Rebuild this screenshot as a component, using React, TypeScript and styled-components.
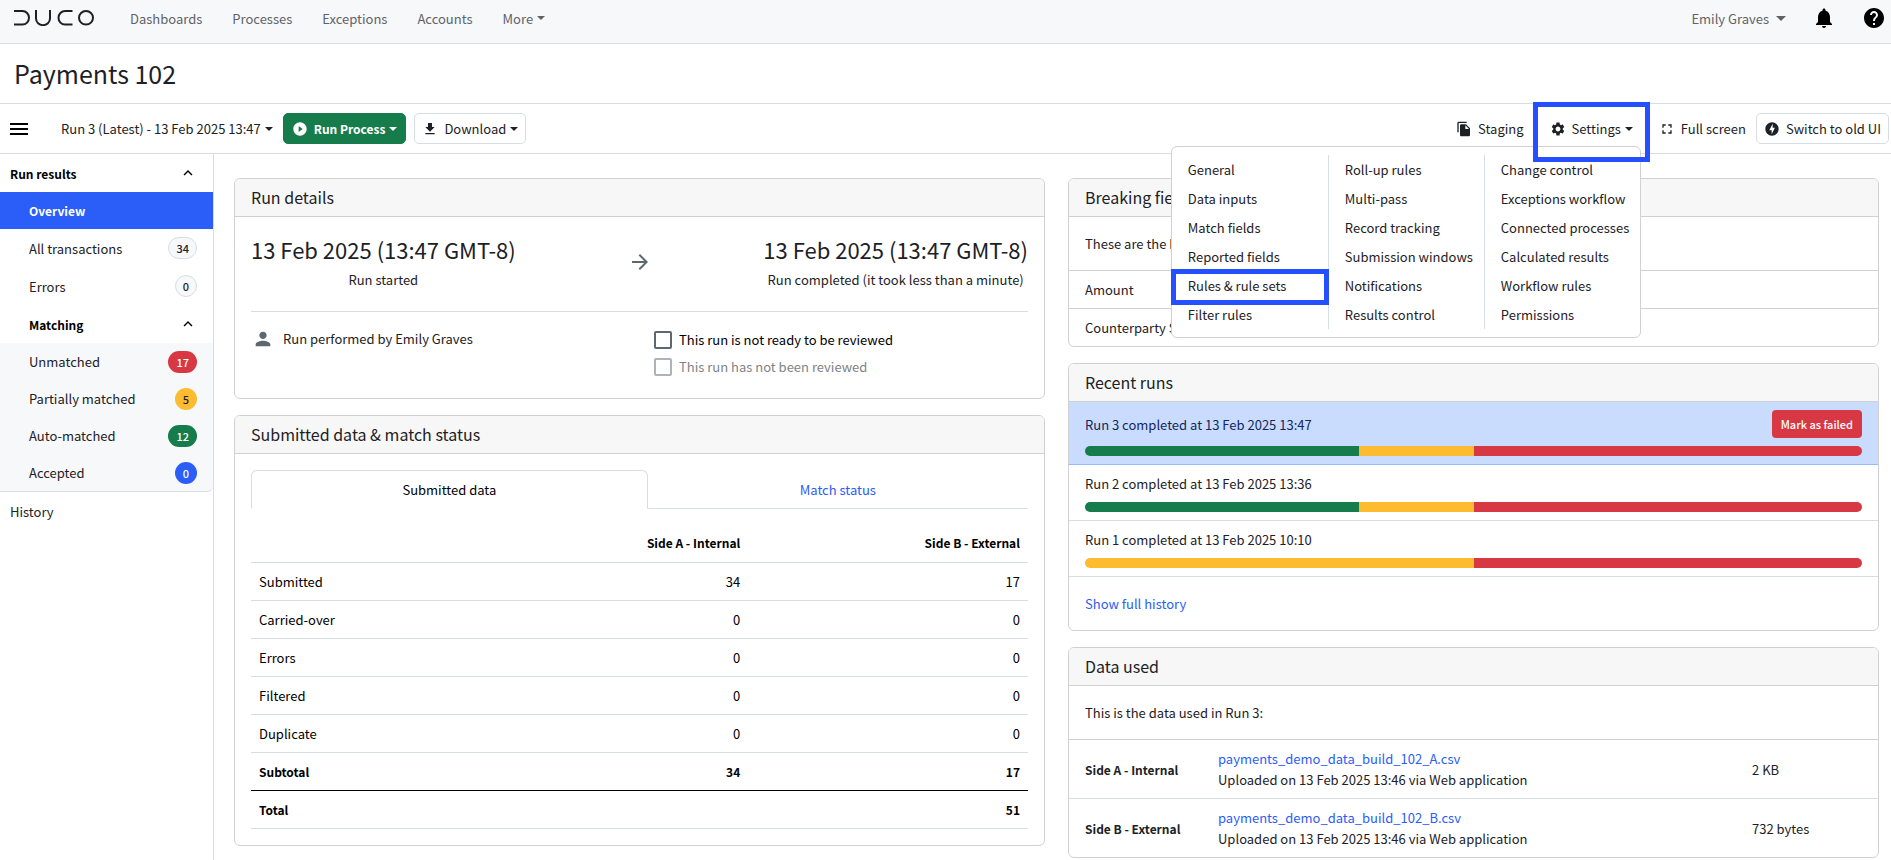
import React, { ReactNode, useState } from "react";
import styled, { createGlobalStyle, css } from "styled-components";
import {
  MdArrowForward,
  MdDownload,
  MdFileCopy,
  MdFullscreen,
  MdHelp,
  MdKeyboardArrowUp,
  MdNotifications,
  MdOfflineBolt,
  MdPerson,
  MdPlayCircleFilled,
  MdSettings,
} from "react-icons/md";

const color = {
  text: "#1d2125",
  muted: "#5f6368",
  line: "#d8dde2",
  cardLine: "#cfd1d4",
  surface: "#f7f8fa",
  cardHead: "#f7f7f7",
  blue: "#2b5df9",
  frame: "#2450ff",
  green: "#177c4c",
  amber: "#fdbb30",
  red: "#d73843",
};

const GlobalStyle = createGlobalStyle`
  *, *::before, *::after { box-sizing: border-box; }
  body {
    margin: 0;
    background: #fff;
    color: ${color.text};
    font-family: "Source Sans Pro", "Noto Sans CJK SC", "Noto Sans", sans-serif;
    font-size: 13px;
    line-height: 21px;
  }
  button, input { font: inherit; color: inherit; }
  h1, h2, h3, p, ul { margin: 0; padding: 0; font-weight: 400; }
  ul { list-style: none; }
  a { color: inherit; text-decoration: none; }
`;

const boldText = css`
  font-size: 12px;
  font-weight: 700;
`;

const Page = styled.div`
  display: flex;
  flex-direction: column;
  min-height: 100vh;
`;

const TopBar = styled.header`
  display: flex;
  align-items: center;
  height: 44px;
  padding: 0 5px 7px 14px;
  background: ${color.surface};
  border-bottom: 1px solid ${color.line};
  color: ${color.muted};
`;

const Logo = styled.svg`
  width: 80px;
  height: 16px;
  margin-right: 36px;
`;

const MainNav = styled.nav`
  display: flex;
  gap: 30px;
  flex: 1;
`;

const Caret = styled.span<{ $large?: boolean }>`
  display: inline-block;
  border: ${(p) => (p.$large ? 5 : 4)}px solid transparent;
  border-top-color: currentColor;
  border-bottom: 0;
`;

const PlainButton = styled.button`
  display: inline-flex;
  align-items: center;
  gap: 4px;
  padding: 0;
  border: 0;
  background: none;
  white-space: nowrap;
  cursor: pointer;
`;

const UserArea = styled.div`
  display: flex;
  align-items: center;
  gap: 26px;
`;

const UserButton = styled(PlainButton)`
  gap: 7px;
`;

const IconButton = styled(PlainButton)`
  color: #000;
`;

const TitleBar = styled.div`
  display: flex;
  align-items: center;
  height: 60px;
  padding: 0 14px 2px;
  border-bottom: 1px solid ${color.line};
`;

const Title = styled.h1`
  font-size: 25px;
  line-height: 32px;
`;

const Toolbar = styled.div`
  display: flex;
  align-items: center;
  justify-content: space-between;
  height: 50px;
  padding: 0 2px 0 10px;
  border-bottom: 1px solid ${color.line};
`;

const ToolGroup = styled.div`
  display: flex;
  align-items: center;
`;

const MenuButton = styled(PlainButton)`
  flex-direction: column;
  gap: 3px;
  width: 18px;
  margin-right: 33px;
  span { width: 100%; height: 2px; background: #000; }
`;

const RunPicker = styled(PlainButton)`
  margin-right: 10px;
`;

const BoxButton = styled(PlainButton)<{ $primary?: boolean }>`
  height: 31px;
  padding: 0 7px;
  border: 1px solid ${color.line};
  border-radius: 5px;
  margin-right: 8px;
  &:last-child { margin-right: 0; }
  svg { margin-right: 2px; }
  ${(p) =>
    p.$primary &&
    css`
      ${boldText}
      padding: 0 8px;
      background: ${color.green};
      border-color: ${color.green};
      color: #fff;
    `}
`;

const ToolButton = styled(PlainButton)`
  svg { margin-right: 2px; }
`;

const FullScreenButton = styled(ToolButton)`
  margin-right: 10px;
`;

const SettingsArea = styled.div`
  position: relative;
  display: flex;
  align-items: center;
  padding: 0 26px;
`;

const SettingsFrame = styled.span`
  position: absolute;
  z-index: 3;
  inset: -16px 9px -23px;
  border: 5px solid ${color.frame};
  pointer-events: none;
`;

const SettingsMenu = styled.div`
  position: absolute;
  z-index: 2;
  top: 28px;
  right: 18px;
  display: grid;
  grid-template-columns: repeat(3, 156px);
  padding: 8px 0;
  background: #fff;
  border: 1px solid ${color.cardLine};
  border-radius: 6px;
`;

const MenuColumn = styled.ul`
  & + & { border-left: 1px solid ${color.line}; }
`;

const MenuItem = styled.li`
  position: relative;
  a {
    display: block;
    padding: 4px 0 4px 16px;
    white-space: nowrap;
  }
`;

const ItemFrame = styled.span`
  position: absolute;
  inset: -2px -1px -5px;
  border: 5px solid ${color.frame};
  pointer-events: none;
`;

const Body = styled.div`
  display: flex;
  flex: 1;
`;

const Sidebar = styled.nav`
  width: 214px;
  flex: none;
  border-right: 1px solid ${color.line};
`;

const SideHeading = styled.button<{ $nested?: boolean }>`
  display: flex;
  align-items: center;
  justify-content: space-between;
  width: 100%;
  height: 38px;
  padding: 0 16px 0 ${(p) => (p.$nested ? 29 : 10)}px;
  border: 0;
  background: none;
  color: #000;
  ${boldText}
  cursor: pointer;
`;

const SideLink = styled.a<{ $active?: boolean; $top?: boolean; $dense?: boolean }>`
  display: flex;
  align-items: center;
  justify-content: space-between;
  height: ${(p) => (p.$dense || p.$active ? 37 : 38)}px;
  padding: 0 16px 0 ${(p) => (p.$top ? 10 : 29)}px;
  ${(p) =>
    p.$active &&
    css`
      ${boldText}
      background: ${color.blue};
      color: #fff;
    `}
`;

const MatchGroup = styled.div`
  background: ${color.surface};
  border-bottom: 1px solid ${color.line};
  border-radius: 0 0 6px 0;
`;

const badgeTone = {
  plain: css`background: ${color.surface}; border-color: ${color.line}; color: ${color.text};`,
  red: css`background: ${color.red}; color: #fff;`,
  amber: css`background: ${color.amber}; color: ${color.text};`,
  green: css`background: ${color.green}; color: #fff;`,
  blue: css`background: ${color.blue}; color: #fff;`,
};

const Badge = styled.span<{ $tone: keyof typeof badgeTone }>`
  padding: 0 7px;
  border: 1px solid transparent;
  border-radius: 11px;
  font-size: 11px;
  line-height: 20px;
  font-weight: 500;
  ${(p) => badgeTone[p.$tone]}
`;

const Content = styled.main`
  display: grid;
  grid-template-columns: minmax(0, 1fr) minmax(0, 1fr);
  gap: 23px;
  align-items: start;
  flex: 1;
  padding: 24px 12px 0 20px;
`;

const Column = styled.div`
  display: flex;
  flex-direction: column;
  gap: 16px;
`;

const Card = styled.section`
  border: 1px solid ${color.cardLine};
  border-radius: 6px;
  overflow: hidden;
`;

const CardTitle = styled.h2`
  padding: 6px 16px 7px;
  background: ${color.cardHead};
  border-bottom: 1px solid ${color.cardLine};
  font-size: 16px;
  line-height: 24px;
`;

const DetailBody = styled.div`
  padding: 16px 16px 18px;
`;

const Times = styled.div`
  display: flex;
  justify-content: space-between;
  align-items: center;
  padding: 0 0 21px;
  border-bottom: 1px solid ${color.line};
`;

const TimeBlock = styled.div`
  text-align: center;
`;

const TimeValue = styled.h3`
  padding-bottom: 3px;
  font-size: 22px;
  line-height: 33px;
`;

const Review = styled.div`
  display: grid;
  grid-template-columns: 403px 1fr;
  padding-top: 14px;
`;

const Performer = styled.p`
  display: flex;
  align-items: flex-start;
  gap: 9px;
  padding: 2px 0 0 1px;
  svg { color: #5d676f; }
`;

const CheckLabel = styled.label<{ $off?: boolean }>`
  display: flex;
  align-items: center;
  gap: 7px;
  height: 27px;
  color: ${(p) => (p.$off ? "#808386" : "#000")};
`;

const CheckBox = styled.input`
  appearance: none;
  width: 18px;
  height: 18px;
  margin: 0;
  border: 2px solid #5d676f;
  border-radius: 2px;
  background: #fff;
  &:checked { background: ${color.blue}; }
  &:disabled { border-color: #aeb3b7; }
`;

const SubmittedBody = styled.div`
  padding: 16px;
`;

const Tabs = styled.div`
  display: flex;
  margin-bottom: 15px;
`;

const Tab = styled.button<{ $active?: boolean }>`
  flex: ${(p) => (p.$active ? "397 0 0" : "380 0 0")};
  height: 39px;
  border: 1px solid transparent;
  border-bottom-color: ${color.line};
  border-radius: 6px 6px 0 0;
  background: none;
  color: ${color.blue};
  cursor: pointer;
  ${(p) =>
    p.$active
      ? css`
          border-color: ${color.line};
          border-bottom-color: transparent;
          color: #000;
        `
      : css`border-radius: 0;`}
`;

const DataTable = styled.table`
  width: 100%;
  border-collapse: collapse;
  table-layout: fixed;
  color: #000;
`;

const Cell = styled.td`
  padding: 8px;
  text-align: right;
`;

const HeadCell = styled.th<{ $left?: boolean }>`
  padding: 8px;
  font-weight: inherit;
  text-align: ${(p) => (p.$left ? "left" : "right")};
`;

const Row = styled.tr<{ $bold?: boolean; $rule?: boolean }>`
  height: 38px;
  border-bottom: 1px solid ${(p) => (p.$rule ? "#000" : color.line)};
  ${(p) => p.$bold && boldText}
`;

const Line = styled.div<{ $tall?: boolean; $last?: boolean }>`
  padding: ${(p) => (p.$tall ? "16px" : "8px 16px")};
  border-bottom: ${(p) => (p.$last ? "0" : `1px solid ${color.cardLine}`)};
`;

const RunLine = styled.div<{ $current?: boolean }>`
  padding: 8px 16px;
  border-bottom: 1px solid ${(p) => (p.$current ? "#96b9fb" : color.line)};
  background: ${(p) => (p.$current ? "#c9dcfd" : "#fff")};
  color: ${(p) => (p.$current ? "#12265f" : color.text)};
`;

const RunHead = styled.div`
  display: flex;
  align-items: center;
  justify-content: space-between;
  margin-bottom: 8px;
`;

const FailButton = styled.button`
  height: 28px;
  padding: 0 9px;
  border: 0;
  border-radius: 4px;
  background: ${color.red};
  color: #fff;
  font-size: 11px;
  font-weight: 500;
  line-height: 18px;
  cursor: pointer;
`;

const RunBar = styled.div`
  display: flex;
  height: 10px;
  border-radius: 5px;
  overflow: hidden;
`;

const Segment = styled.span<{ $tone: "green" | "amber" | "red" }>`
  background: ${(p) => color[p.$tone]};
`;

const TextLink = styled.a`
  color: ${color.blue};
`;

const FileRow = styled.div`
  display: grid;
  grid-template-columns: 133px 1fr 110px;
  align-items: center;
  padding: 8px 16px;
  & + & { border-top: 1px solid ${color.line}; }
`;

const Strong = styled.strong`
  ${boldText}
`;

function CardBox({ title, children }: { title: string; children: ReactNode }) {
  return (
    <Card>
      <CardTitle>{title}</CardTitle>
      {children}
    </Card>
  );
}

const menuColumns = [
  ["General", "Data inputs", "Match fields", "Reported fields", "Rules & rule sets", "Filter rules"],
  ["Roll-up rules", "Multi-pass", "Record tracking", "Submission windows", "Notifications", "Results control"],
  ["Change control", "Exceptions workflow", "Connected processes", "Calculated results", "Workflow rules", "Permissions"],
];

const matching = [
  ["Unmatched", "17", "red"],
  ["Partially matched", "5", "amber"],
  ["Auto-matched", "12", "green"],
  ["Accepted", "0", "blue"],
] as const;

const tableRows = [
  ["Submitted", "34", "17"],
  ["Carried-over", "0", "0"],
  ["Errors", "0", "0"],
  ["Filtered", "0", "0"],
  ["Duplicate", "0", "0"],
];

type Share = { tone: "green" | "amber" | "red"; part: number };
const mixed: Share[] = [
  { tone: "green", part: 12 },
  { tone: "amber", part: 5 },
  { tone: "red", part: 17 },
];
const runs: { text: string; current?: boolean; shares: Share[] }[] = [
  { text: "Run 3 completed at 13 Feb 2025 13:47", current: true, shares: mixed },
  { text: "Run 2 completed at 13 Feb 2025 13:36", shares: mixed },
  {
    text: "Run 1 completed at 13 Feb 2025 10:10",
    shares: [
      { tone: "amber", part: 17 },
      { tone: "red", part: 17 },
    ],
  },
];

const files = [
  ["Side A - Internal", "payments_demo_data_build_102_A.csv", "2 KB"],
  ["Side B - External", "payments_demo_data_build_102_B.csv", "732 bytes"],
];

export default function App() {
  const [ready, setReady] = useState(false);
  return (
    <>
      <GlobalStyle />
      <Page>
        <TopBar>
          <Logo viewBox="0 0 80 16" fill="none" stroke="#1d2125" strokeWidth="2" role="img" aria-label="Duco">
            <path d="M0 1h8.500a6.500 6.800 0 0 1 0 13.600H0" />
            <path d="M22 0v8.500a6.500 6.200 0 0 0 14 0V0" />
            <path d="M58.500 1h-7.500a6.500 6.800 0 0 0 0 13.600h7.500" />
            <ellipse cx="72" cy="7.800" rx="7" ry="6.800" />
          </Logo>
          <MainNav>
            <a href="#dashboards">Dashboards</a>
            <a href="#processes">Processes</a>
            <a href="#exceptions">Exceptions</a>
            <a href="#accounts">Accounts</a>
            <PlainButton>More<Caret /></PlainButton>
          </MainNav>
          <UserArea>
            <UserButton>Emily Graves<Caret $large /></UserButton>
            <IconButton aria-label="Notifications"><MdNotifications size={24} /></IconButton>
            <IconButton aria-label="Help"><MdHelp size={24} /></IconButton>
          </UserArea>
        </TopBar>

        <TitleBar><Title>Payments 102</Title></TitleBar>

        <Toolbar>
          <ToolGroup>
            <MenuButton aria-label="Toggle menu"><span /><span /><span /></MenuButton>
            <RunPicker>Run 3 (Latest) - 13 Feb 2025 13:47<Caret /></RunPicker>
            <BoxButton $primary><MdPlayCircleFilled size={16} />Run Process<Caret /></BoxButton>
            <BoxButton><MdDownload size={16} />Download<Caret /></BoxButton>
          </ToolGroup>
          <ToolGroup>
            <ToolButton><MdFileCopy size={16} />Staging</ToolButton>
            <SettingsArea>
              <ToolButton aria-expanded="true"><MdSettings size={16} />Settings<Caret /></ToolButton>
              <SettingsFrame />
              <SettingsMenu>
                {menuColumns.map((items) => (
                  <MenuColumn key={items[0]}>
                    {items.map((item) => (
                      <MenuItem key={item}>
                        <a href="#settings">{item}</a>
                        {item === "Rules & rule sets" && <ItemFrame />}
                      </MenuItem>
                    ))}
                  </MenuColumn>
                ))}
              </SettingsMenu>
            </SettingsArea>
            <FullScreenButton><MdFullscreen size={16} />Full screen</FullScreenButton>
            <BoxButton><MdOfflineBolt size={16} />Switch to old UI</BoxButton>
          </ToolGroup>
        </Toolbar>

        <Body>
          <Sidebar>
            <SideHeading>Run results<MdKeyboardArrowUp size={18} /></SideHeading>
            <SideLink href="#overview" $active>Overview</SideLink>
            <SideLink href="#all">All transactions<Badge $tone="plain">34</Badge></SideLink>
            <SideLink href="#errors">Errors<Badge $tone="plain">0</Badge></SideLink>
            <SideHeading $nested>Matching<MdKeyboardArrowUp size={18} /></SideHeading>
            <MatchGroup>
              {matching.map(([name, count, tone]) => (
                <SideLink key={name} href="#matching" $dense>
                  {name}
                  <Badge $tone={tone}>{count}</Badge>
                </SideLink>
              ))}
            </MatchGroup>
            <SideLink href="#history" $top>History</SideLink>
          </Sidebar>

          <Content>
            <Column>
              <CardBox title="Run details">
                <DetailBody>
                  <Times>
                    <TimeBlock>
                      <TimeValue>13 Feb 2025 (13:47 GMT-8)</TimeValue>
                      <p>Run started</p>
                    </TimeBlock>
                    <MdArrowForward size={24} color="#5d676f" />
                    <TimeBlock>
                      <TimeValue>13 Feb 2025 (13:47 GMT-8)</TimeValue>
                      <p>Run completed (it took less than a minute)</p>
                    </TimeBlock>
                  </Times>
                  <Review>
                    <Performer><MdPerson size={22} />Run performed by Emily Graves</Performer>
                    <div>
                      <CheckLabel>
                        <CheckBox type="checkbox" checked={ready} onChange={() => setReady(!ready)} />
                        This run is not ready to be reviewed
                      </CheckLabel>
                      <CheckLabel $off>
                        <CheckBox type="checkbox" disabled />
                        This run has not been reviewed
                      </CheckLabel>
                    </div>
                  </Review>
                </DetailBody>
              </CardBox>

              <CardBox title="Submitted data & match status">
                <SubmittedBody>
                  <Tabs role="tablist">
                    <Tab role="tab" aria-selected="true" $active>Submitted data</Tab>
                    <Tab role="tab" aria-selected="false">Match status</Tab>
                  </Tabs>
                  <DataTable>
                    <colgroup>
                      <col style={{ width: "28%" }} />
                      <col style={{ width: "36%" }} />
                      <col style={{ width: "36%" }} />
                    </colgroup>
                    <thead>
                      <Row $bold>
                        <Cell />
                        <HeadCell scope="col">Side A - Internal</HeadCell>
                        <HeadCell scope="col">Side B - External</HeadCell>
                      </Row>
                    </thead>
                    <tbody>
                      {tableRows.map(([name, a, b]) => (
                        <Row key={name}>
                          <HeadCell scope="row" $left>{name}</HeadCell>
                          <Cell>{a}</Cell>
                          <Cell>{b}</Cell>
                        </Row>
                      ))}
                      <Row $bold $rule>
                        <HeadCell scope="row" $left>Subtotal</HeadCell>
                        <Cell>34</Cell>
                        <Cell>17</Cell>
                      </Row>
                      <Row $bold>
                        <HeadCell scope="row" $left>Total</HeadCell>
                        <Cell />
                        <Cell>51</Cell>
                      </Row>
                    </tbody>
                  </DataTable>
                </SubmittedBody>
              </CardBox>
            </Column>

            <Column>
              <CardBox title="Breaking fields">
                <Line $tall>These are the breaking fields in Run 3:</Line>
                <Line>Amount</Line>
                <Line $last>Counterparty SSI</Line>
              </CardBox>

              <CardBox title="Recent runs">
                {runs.map((run) => (
                  <RunLine key={run.text} $current={run.current}>
                    <RunHead>
                      {run.text}
                      {run.current && <FailButton>Mark as failed</FailButton>}
                    </RunHead>
                    <RunBar>
                      {run.shares.map((s) => (
                        <Segment key={s.tone} $tone={s.tone} style={{ flexGrow: s.part }} />
                      ))}
                    </RunBar>
                  </RunLine>
                ))}
                <Line $tall $last><TextLink href="#history">Show full history</TextLink></Line>
              </CardBox>

              <CardBox title="Data used">
                <Line $tall>This is the data used in Run 3:</Line>
                {files.map(([side, file, size]) => (
                  <FileRow key={side}>
                    <Strong>{side}</Strong>
                    <div>
                      <TextLink href="#file">{file}</TextLink>
                      <p>Uploaded on 13 Feb 2025 13:46 via Web application</p>
                    </div>
                    <span>{size}</span>
                  </FileRow>
                ))}
              </CardBox>
            </Column>
          </Content>
        </Body>
      </Page>
    </>
  );
}
